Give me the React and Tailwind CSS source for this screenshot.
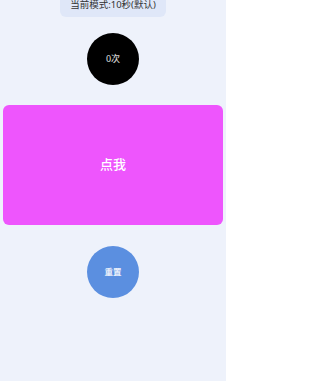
import React, { useState } from 'react';

export default function App() {
  const [count, setCount] = useState(0);

  return (
    <div className="w-[226px] h-[381px] overflow-hidden bg-[#eef2fb] flex flex-col items-center font-['Noto_Sans','Noto_Sans_CJK_SC',sans-serif]">
      {/* Mode pill */}
      <div className="-mt-[5px] px-[10px] pt-[3px] pb-[6px] rounded-[6px] bg-[#dfe7f8] text-[9.5px] leading-[13px] text-[#333]">
        当前模式:10秒(默认)
      </div>

      {/* Counter */}
      <div className="mt-[16px] w-[52px] h-[52px] rounded-full bg-black flex items-center justify-center text-[9px] font-medium text-[#cfcfcf]">
        {count}次
      </div>

      {/* Tap area */}
      <button
        onClick={() => setCount(count + 1)}
        className="mt-[20px] w-[220px] h-[120px] rounded-[6px] bg-[#ee55fd] flex items-center justify-center text-[13px] font-medium text-white"
      >
        点我
      </button>

      {/* Reset */}
      <button
        onClick={() => setCount(0)}
        className="mt-[21px] w-[52px] h-[52px] rounded-full bg-[#5b8fe0] flex items-center justify-center text-[8.5px] font-bold text-[#e8eefa]"
      >
        重置
      </button>
    </div>
  );
}
